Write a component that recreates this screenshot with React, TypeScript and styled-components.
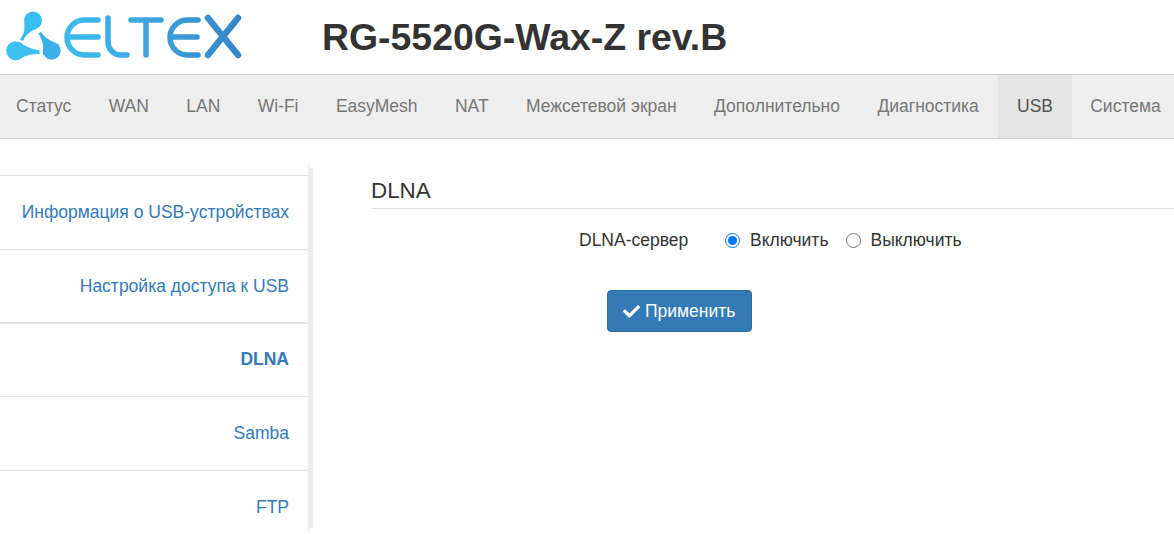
import React from "react";
import styled, { createGlobalStyle } from "styled-components";
import { FaCheck } from "react-icons/fa";

const GlobalStyle = createGlobalStyle`
  html, body {
    margin: 0;
    padding: 0;
    background: #fff;
    font-family: "Liberation Sans", Arial, sans-serif;
    color: #333;
    overflow: hidden;
  }
`;

const Page = styled.div`
  width: 1174px;
  height: 534px;
  overflow: hidden;
`;

const Header = styled.header`
  display: flex;
  align-items: center;
  height: 74px;
`;

const LogoWrap = styled.div`
  width: 322px;
  height: 74px;
  flex: none;
`;

const Title = styled.h1`
  margin: 0;
  font-size: 37.4px;
  font-weight: 700;
  line-height: 74px;
  color: #333;
`;

const Nav = styled.nav`
  display: flex;
  height: 63px;
  background: #eee;
  border-top: 1px solid #ccc;
  border-bottom: 1px solid #ccc;
  overflow: hidden;
`;

const NavItem = styled.a<{ $active?: boolean; $first?: boolean }>`
  flex: none;
  padding: 0 ${(p) => (p.$active ? "18.5px" : "18.7px")} 0 ${(p) => (p.$first ? "16px" : p.$active ? "19.5px" : "18.7px")};
  line-height: 63px;
  font-size: 17.5px;
  color: ${(p) => (p.$active ? "#555" : "#777")};
  background: ${(p) => (p.$active ? "#e4e4e4" : "transparent")};
`;

const Body = styled.div`
  display: flex;
  align-items: flex-start;
`;

const Sidebar = styled.aside`
  flex: none;
  width: 308px;
  margin-top: 25px;
  padding-top: 11px;
  height: 357px;
  border-right: 1px solid #eee;
  box-shadow: 8px 0 0 -4px #ececec;
`;

const SideItem = styled.a<{ $active?: boolean }>`
  display: block;
  box-sizing: border-box;
  height: 74px;
  margin-top: ${(p) => (p.$active ? "-1px" : "0")};
  padding-right: 19px;
  border-top: ${(p) => (p.$active ? "2px" : "1px")} solid #e4e4e4;
  line-height: ${(p) => (p.$active ? "70px" : "72px")};
  text-align: right;
  font-size: 17.5px;
  font-weight: ${(p) => (p.$active ? 700 : 400)};
  color: #337ab7;
`;

const Content = styled.main`
  flex: 1;
  padding: 39px 0 0 62px;
`;

const SectionTitle = styled.h2`
  margin: 0;
  height: 30px;
  font-size: 22.4px;
  font-weight: 400;
  line-height: 26px;
  color: #333;
  border-bottom: 1px solid #e5e5e5;
`;

const FormRow = styled.div`
  display: flex;
  align-items: center;
  height: 22px;
  margin-top: 20px;
  padding-left: 208px;
  font-size: 17.5px;
  color: #333;
`;

const FieldLabel = styled.span`
  width: 146px;
  flex: none;
`;

const RadioLabel = styled.label`
  display: flex;
  align-items: center;
  gap: 10px;
  margin-right: 17px;
`;

const Radio = styled.input.attrs({ type: "radio", name: "dlna" })`
  width: 15px;
  height: 15px;
  margin: 0;
  accent-color: #0075ff;
`;

const ApplyButton = styled.button`
  display: flex;
  align-items: center;
  gap: 5px;
  box-sizing: border-box;
  width: 145px;
  height: 42px;
  margin: 39px 0 0 236px;
  padding: 0 0 0 15px;
  background: #337ab7;
  border: 1px solid #2e6da4;
  border-radius: 4px;
  color: #fff;
  font-family: inherit;
  font-size: 17.5px;
`;

const navItems = ["Статус", "WAN", "LAN", "Wi-Fi", "EasyMesh", "NAT", "Межсетевой экран", "Дополнительно", "Диагностика", "USB", "Система"];
const sideItems = ["Информация о USB-устройствах", "Настройка доступа к USB", "DLNA", "Samba", "FTP"];

function Logo() {
  return (
    <svg width="250" height="74" viewBox="0 0 250 74" fill="none">
      <defs>
        <linearGradient id="logoGrad" x1="60" y1="0" x2="245" y2="0" gradientUnits="userSpaceOnUse">
          <stop offset="0" stopColor="#3cbdee" />
          <stop offset="0.5" stopColor="#3ba3dd" />
          <stop offset="1" stopColor="#3683c6" />
        </linearGradient>
      </defs>
      <circle cx="33" cy="20.500" r="9" fill="#38bdf0" />
      <path d="M24.300 23 C25 30 24 34 20 39.500 L23 41 C26 35 30 31 37 28.500 Z" fill="#38bdf0" />
      <circle cx="15.700" cy="50.700" r="9.500" fill="#3cc0f0" />
      <path d="M20 42.300 C26 47 32 49 39.500 50.500 L39.500 54 C32 54 26 55 20 59 Z" fill="#3cc0f0" />
      <circle cx="51.700" cy="50.700" r="9" fill="#38b0e8" />
      <path d="M38.500 33.500 L41 32 C45 38 51 41 58 44.500 L43.500 55 C44 47 43 41 38.500 33.500 Z" fill="#38b0e8" />
      <g stroke="url(#logoGrad)" strokeWidth="5.500" strokeLinecap="round" strokeLinejoin="round">
        <path d="M98 20 H84.500 A17.500 17.500 0 0 0 84.500 55 H98" />
        <path d="M69 37 H98" />
        <path d="M108 18 V42 A13 13 0 0 0 121 55 H127" />
        <path d="M131 20 H161 M146 20 V55" />
        <path d="M198 20 H187.500 A17.500 17.500 0 0 0 187.500 55 H198" />
        <path d="M172 37 H197" />
        <path d="M208 18 L238 55 M238 18 L208 55" strokeWidth="6.500" />
      </g>
    </svg>
  );
}

export default function App() {
  return (
    <Page>
      <GlobalStyle />
      <Header>
        <LogoWrap>
          <Logo />
        </LogoWrap>
        <Title>RG-5520G-Wax-Z rev.B</Title>
      </Header>
      <Nav>
        {navItems.map((item, i) => (
          <NavItem key={item} $first={i === 0} $active={item === "USB"}>
            {item}
          </NavItem>
        ))}
      </Nav>
      <Body>
        <Sidebar>
          {sideItems.map((item) => (
            <SideItem key={item} $active={item === "DLNA"}>
              {item}
            </SideItem>
          ))}
        </Sidebar>
        <Content>
          <SectionTitle>DLNA</SectionTitle>
          <FormRow>
            <FieldLabel>DLNA-сервер</FieldLabel>
            <RadioLabel>
              <Radio defaultChecked />
              Включить
            </RadioLabel>
            <RadioLabel>
              <Radio />
              Выключить
            </RadioLabel>
          </FormRow>
          <ApplyButton>
            <FaCheck size={17} />
            Применить
          </ApplyButton>
        </Content>
      </Body>
    </Page>
  );
}
